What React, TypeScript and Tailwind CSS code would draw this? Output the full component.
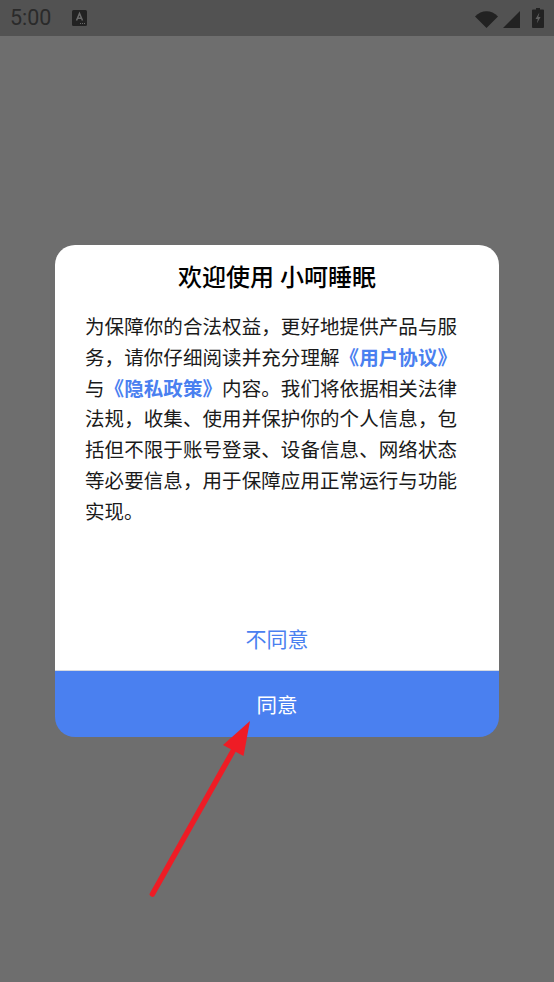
const cjk = "font-['Roboto','Noto_Sans_CJK_SC',sans-serif]";

function StatusBar() {
  return (
    <div className="flex h-9 shrink-0 items-center justify-between bg-[#525252] pl-[10px] pr-[10px] text-[#2a2a2a]">
      <div className="flex items-center">
        <span className="font-['Roboto',sans-serif] text-[21.5px] leading-none">5:00</span>
        <svg className="ml-[21px]" width="15" height="16" viewBox="0 0 15 16">
          <rect width="15" height="16" rx="1.5" fill="#222222" />
          <path d="M4.5 10.5 L7.5 3.5 L10.5 10.5 M5.6 8.3 H9.4" stroke="#6a6a6a" strokeWidth="1.5" fill="none" />
          <path d="M8 13.5 H9 M10 13.5 H11 M12 13.5 H13" stroke="#6a6a6a" strokeWidth="1" />
        </svg>
      </div>
      <div className="mt-[-1px] flex items-end">
        <svg width="23" height="17" viewBox="0 0 23 17">
          <path d="M0 5.5 C6.5 -1.5 16.5 -1.5 23 5.5 L11.5 17 Z" fill="#222222" />
        </svg>
        <svg className="ml-[5px]" width="17" height="17" viewBox="0 0 17 17">
          <path d="M17 0 V17 H0 Z" fill="#222222" />
        </svg>
        <svg className="ml-[12px]" width="12" height="20" viewBox="0 0 12 20">
          <path d="M4 0 H8 V1.5 H11 A1 1 0 0 1 12 2.5 V19 A1 1 0 0 1 11 20 H1 A1 1 0 0 1 0 19 V2.5 A1 1 0 0 1 1 1.5 H4 Z" fill="#222222" />
          <path d="M7.4 4.5 L3.5 11 H5.8 L4.8 15.5 L8.6 9 H6.3 Z" fill="#5f5f5f" />
        </svg>
      </div>
    </div>
  );
}

function PolicyLink({ children }: { children: string }) {
  return <span className="font-semibold text-[#4a80f0]">{children}</span>;
}

export default function App() {
  return (
    <div className={`relative flex h-[982px] w-[554px] flex-col overflow-hidden bg-[#6e6e6e] ${cjk}`}>
      <StatusBar />

      <div className="ml-[55px] mt-[209px] flex h-[492px] w-[444px] flex-col">
        <div className="flex flex-1 flex-col rounded-t-[20px] bg-white">
          <h1 className="mt-[18px] text-center text-[24px] font-medium leading-[30px] text-black">
            欢迎使用 小呵睡眠
          </h1>
          <p className="mt-[20px] pl-[30px] pr-[42px] text-justify text-[19.5px] leading-[30.8px] text-[#1a1a1a]">
            为保障你的合法权益，更好地提供产品与服务，请你仔细阅读并充分理解
            <PolicyLink>《用户协议》</PolicyLink>与<PolicyLink>《隐私政策》</PolicyLink>
            内容。我们将依据相关法律法规，收集、使用并保护你的个人信息，包括但不限于账号登录、设备信息、网络状态等必要信息，用于保障应用正常运行与功能实现。
          </p>
          <button className="mt-auto h-[62px] w-full border-b border-[#d5d9e0] pt-[2px] text-[21px] text-[#4a80f0]">
            不同意
          </button>
        </div>
        <button className="h-[66px] w-full rounded-b-[20px] bg-[#4a80f0] pt-[4px] text-[20.5px] text-white">
          同意
        </button>
      </div>

      {/* annotation arrow over the dialog */}
      <svg className="absolute left-0 top-0" width="554" height="982" viewBox="0 0 554 982">
        <path d="M152.5 894 L233 751" stroke="#ee1c25" strokeWidth="5.5" strokeLinecap="round" fill="none" />
        <path d="M250 721 L223 745 L243.5 756 Z" fill="#ee1c25" />
      </svg>
    </div>
  );
}
